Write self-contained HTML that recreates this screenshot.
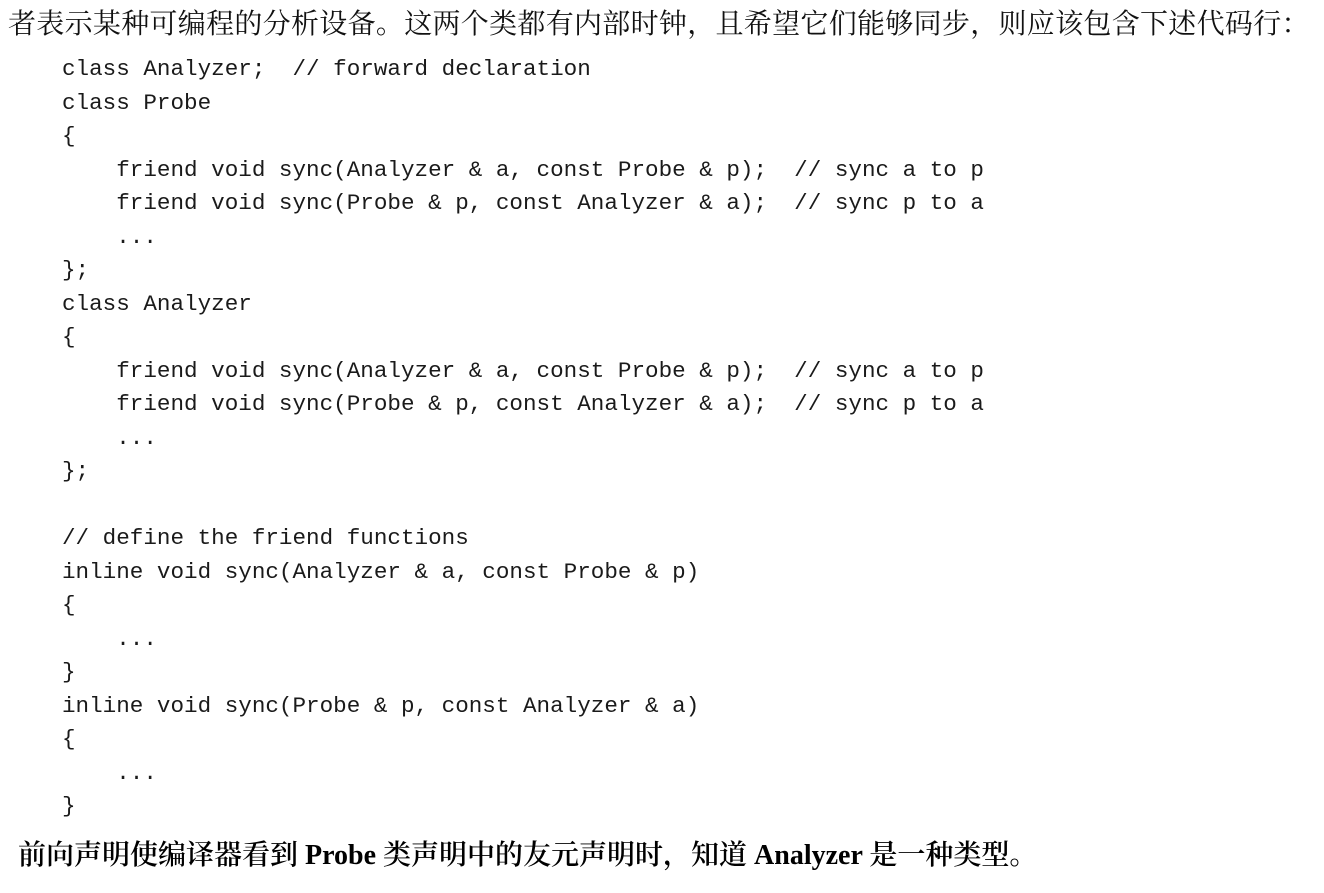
<!DOCTYPE html>
<html><head><meta charset="utf-8"><style>
html,body{margin:0;padding:0;background:#fff;width:1324px;height:893px;overflow:hidden;}
.cn{position:absolute;font-family:"Liberation Serif","Noto Serif CJK SC",serif;font-size:28px;color:#111;white-space:pre;line-height:1;}
pre{position:absolute;left:62px;top:53px;margin:0;font-family:"Liberation Mono",monospace;font-size:22.6px;line-height:33.5px;color:#1a1a1a;}
</style></head><body>
<div class="cn" style="left:8px;top:11px;letter-spacing:0.3px;">者表示某种可编程的分析设备。这两个类都有内部时钟，且希望它们能够同步，则应该包含下述代码行：</div>
<pre>class Analyzer;  // forward declaration
class Probe
{
    friend void sync(Analyzer &amp; a, const Probe &amp; p);  // sync a to p
    friend void sync(Probe &amp; p, const Analyzer &amp; a);  // sync p to a
    ...
};
class Analyzer
{
    friend void sync(Analyzer &amp; a, const Probe &amp; p);  // sync a to p
    friend void sync(Probe &amp; p, const Analyzer &amp; a);  // sync p to a
    ...
};

// define the friend functions
inline void sync(Analyzer &amp; a, const Probe &amp; p)
{
    ...
}
inline void sync(Probe &amp; p, const Analyzer &amp; a)
{
    ...
}</pre>
<div class="cn" style="left:18px;top:842px;font-weight:600;color:#000;">前向声明使编译器看到 Probe 类声明中的友元声明时，知道 Analyzer 是一种类型。</div>
</body></html>
